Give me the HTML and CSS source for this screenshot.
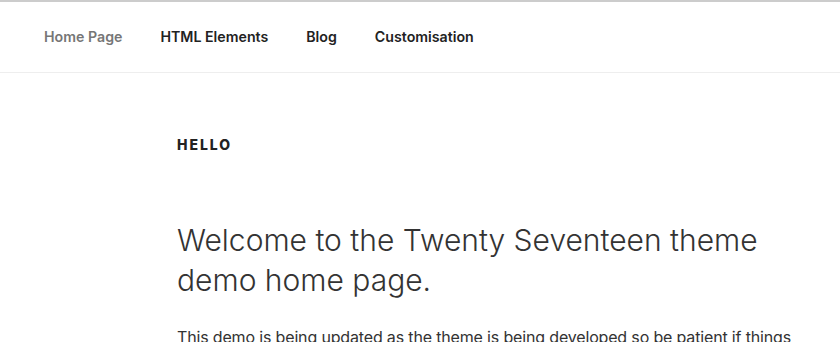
FILE: index.html
```html
<!DOCTYPE html>
<html lang="en">
<head>
    <meta charset="UTF-8">
    <meta name="viewport" content="width=device-width, initial-scale=1.0">
    <title>Twenty Seventeen Demo</title>
    <link rel="stylesheet" href="styles.css">
</head>
<body>
    <nav class="main-navigation">
        <ul class="menu">
            <li class="menu-item current"><a href="#">Home Page</a></li>
            <li class="menu-item"><a href="#">HTML Elements</a></li>
            <li class="menu-item"><a href="#">Blog</a></li>
            <li class="menu-item"><a href="#">Customisation</a></li>
        </ul>
    </nav>

    <main class="site-content">
        <h1 class="entry-title">Hello</h1>
        <div class="entry-content">
            <h2>Welcome to the Twenty Seventeen theme demo home page.</h2>
            <p>This demo is being updated as the theme is being developed so be patient if things break.</p>
        </div>
    </main>
</body>
</html>
```
FILE: styles.css
```css
/* --- base --- */
:root {
    --text-dark: #222;
    --text-body: #333;
    --text-muted: #767676;
    --border-light: #eee;
    --border-top: #ccc;
}

body {
    margin: 0;
    font-family: Inter, "Liberation Sans", sans-serif;
    color: var(--text-body);
    background: #fff;
    border-top: 2px solid var(--border-top);
}

a {
    text-decoration: none;
    color: inherit;
}

/* --- navigation --- */
.main-navigation {
    border-bottom: 1px solid var(--border-light);
    padding: 25px 0 25px 25px;
}

.menu {
    list-style: none;
    margin: 0;
    padding: 0;
    display: flex;
}

.menu-item a {
    display: block;
    padding: 0 19px;
    font-size: 14.2px;
    line-height: 20px;
    font-weight: 600;
    color: var(--text-dark);
}

.menu-item.current a {
    color: var(--text-muted);
}

/* --- content --- */
.site-content {
    padding: 62px 43px 0 177px;
}

.entry-title {
    margin: 0 0 65px;
    font-size: 14px;
    line-height: 20px;
    font-weight: 800;
    letter-spacing: 0.14em;
    text-transform: uppercase;
    color: var(--text-dark);
}

.entry-content h2 {
    margin: 0 0 24px;
    font-size: 30px;
    line-height: 40px;
    font-weight: 300;
    color: var(--text-body);
}

.entry-content p {
    margin: 0;
    font-size: 16px;
    line-height: 26px;
    letter-spacing: -0.01em;
}
```
